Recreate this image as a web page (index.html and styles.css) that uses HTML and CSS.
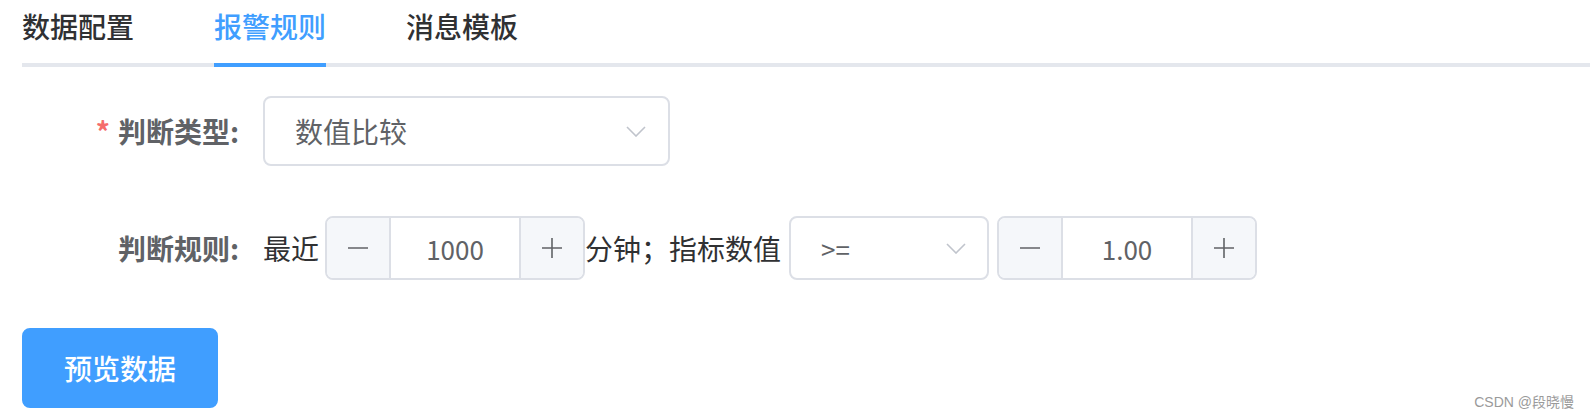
FILE: index.html
```html
<!DOCTYPE html>
<html lang="zh-CN">
<head>
<meta charset="utf-8">
<title>报警规则</title>
<link rel="stylesheet" href="styles.css">
</head>
<body>
<div class="tabs">
  <div class="tab-nav">
    <div class="tab"><span class="tab-label">数据配置</span></div>
    <div class="tab active"><span class="tab-label">报警规则</span></div>
    <div class="tab"><span class="tab-label">消息模板</span></div>
  </div>
</div>
<div class="form">
  <div class="form-item row-type">
    <label class="label"><span class="req">*</span>判断类型:</label>
    <div class="select select-lg">
      <span class="select-value">数值比较</span>
      <svg class="arrow" width="20" height="11" viewBox="0 0 20 11"><path d="M1 1 L10 10 L19 1" fill="none" stroke="#C0C4CC" stroke-width="1.6"/></svg>
    </div>
  </div>
  <div class="form-item row-rule">
    <label class="label">判断规则:</label>
    <div class="rule">
      <span class="txt txt-recent">最近</span>
      <div class="num">
        <span class="num-btn num-dec"><svg width="22" height="22" viewBox="0 0 22 22"><path d="M1 11 H21" stroke="#606266" stroke-width="1.6"/></svg></span>
        <span class="num-val">1000</span>
        <span class="num-btn num-inc"><svg width="22" height="22" viewBox="0 0 22 22"><path d="M1 11 H21 M11 1 V21" stroke="#606266" stroke-width="1.6"/></svg></span>
      </div>
      <span class="txt txt-mid">分钟；指标数值</span>
      <div class="select select-sm">
        <span class="select-value small">&gt;=</span>
        <svg class="arrow" width="20" height="11" viewBox="0 0 20 11"><path d="M1 1 L10 10 L19 1" fill="none" stroke="#C0C4CC" stroke-width="1.6"/></svg>
      </div>
      <div class="num num-last">
        <span class="num-btn num-dec"><svg width="22" height="22" viewBox="0 0 22 22"><path d="M1 11 H21" stroke="#606266" stroke-width="1.6"/></svg></span>
        <span class="num-val">1.00</span>
        <span class="num-btn num-inc"><svg width="22" height="22" viewBox="0 0 22 22"><path d="M1 11 H21 M11 1 V21" stroke="#606266" stroke-width="1.6"/></svg></span>
      </div>
    </div>
  </div>
  <button class="btn" type="button">预览数据</button>
</div>
<div class="watermark">CSDN @段晓慢</div>
</body>
</html>
```

FILE: styles.css
```css
* { box-sizing: border-box; }
html, body { margin: 0; padding: 0; }
body {
  width: 1590px;
  height: 416px;
  overflow: hidden;
  position: relative;
  background: #fff;
  font-family: "Noto Sans CJK SC", "Noto Sans", "Liberation Sans", sans-serif;
  color: #303133;
}

.tabs { padding-left: 22px; }
.tab-nav {
  display: flex;
  border-bottom: 4px solid #E4E7ED;
}
.tab {
  padding: 0 40px;
  margin-bottom: -4px;
}
.tab:first-child { padding-left: 0; }
.tab-label {
  display: block;
  font-size: 28px;
  font-weight: 500;
  line-height: 52px;
  padding-bottom: 11px;
  border-bottom: 4px solid transparent;
  color: #303133;
}
.tab.active .tab-label {
  color: #409EFF;
  border-bottom-color: #409EFF;
}

.form { padding-left: 22px; }
.form-item {
  display: flex;
  align-items: center;
  height: 70px;
}
.row-type { margin-top: 29px; }
.row-rule { margin-top: 47px; }

.label {
  flex: 0 0 241px;
  padding-right: 24px;
  text-align: right;
  font-size: 28px;
  font-weight: 700;
  color: #606266;
  line-height: 70px;
}
.req {
  color: #F56C6C;
  margin-right: 8px;
  font-weight: 700;
}

.select {
  display: flex;
  align-items: center;
  justify-content: space-between;
  border: 2px solid #DCDFE6;
  border-radius: 8px;
  background: #fff;
  padding: 0 22px 0 30px;
}
.select-lg { width: 407px; height: 70px; }
.select-sm { width: 200px; height: 64px; margin-left: 8px; padding-right: 21px; }
.select-value {
  font-size: 28px;
  color: #606266;
}
.select-value.small { font-size: 26px; }
.arrow { display: block; }

.rule {
  display: flex;
  align-items: center;
}
.txt {
  font-size: 28px;
  color: #303133;
  white-space: nowrap;
}
.txt-recent { margin-right: 6px; }

.num {
  display: flex;
  width: 260px;
  height: 64px;
  border: 2px solid #DCDFE6;
  border-radius: 8px;
  overflow: hidden;
  background: #fff;
}
.num-last { margin-left: 8px; }
.num-btn {
  flex: 0 0 64px;
  display: flex;
  align-items: center;
  justify-content: center;
  background: #F5F7FA;
}
.num-dec { border-right: 2px solid #DCDFE6; }
.num-inc { border-left: 2px solid #DCDFE6; }
.num-btn svg { display: block; }
.num-val {
  flex: 1;
  display: flex;
  align-items: center;
  justify-content: center;
  font-size: 26px;
  color: #606266;
}

.btn {
  display: block;
  margin-top: 45px;
  width: 196px;
  height: 80px;
  padding: 0 40px;
  border: 2px solid #409EFF;
  border-radius: 8px;
  background: #409EFF;
  color: #fff;
  font-family: inherit;
  font-size: 28px;
  font-weight: 500;
  line-height: 1;
}

.watermark {
  position: absolute;
  right: 16px;
  bottom: 6px;
  font-size: 14px;
  line-height: 16px;
  color: #9a9a9a;
  font-family: "Liberation Sans", "Noto Sans CJK SC", sans-serif;
}
```
